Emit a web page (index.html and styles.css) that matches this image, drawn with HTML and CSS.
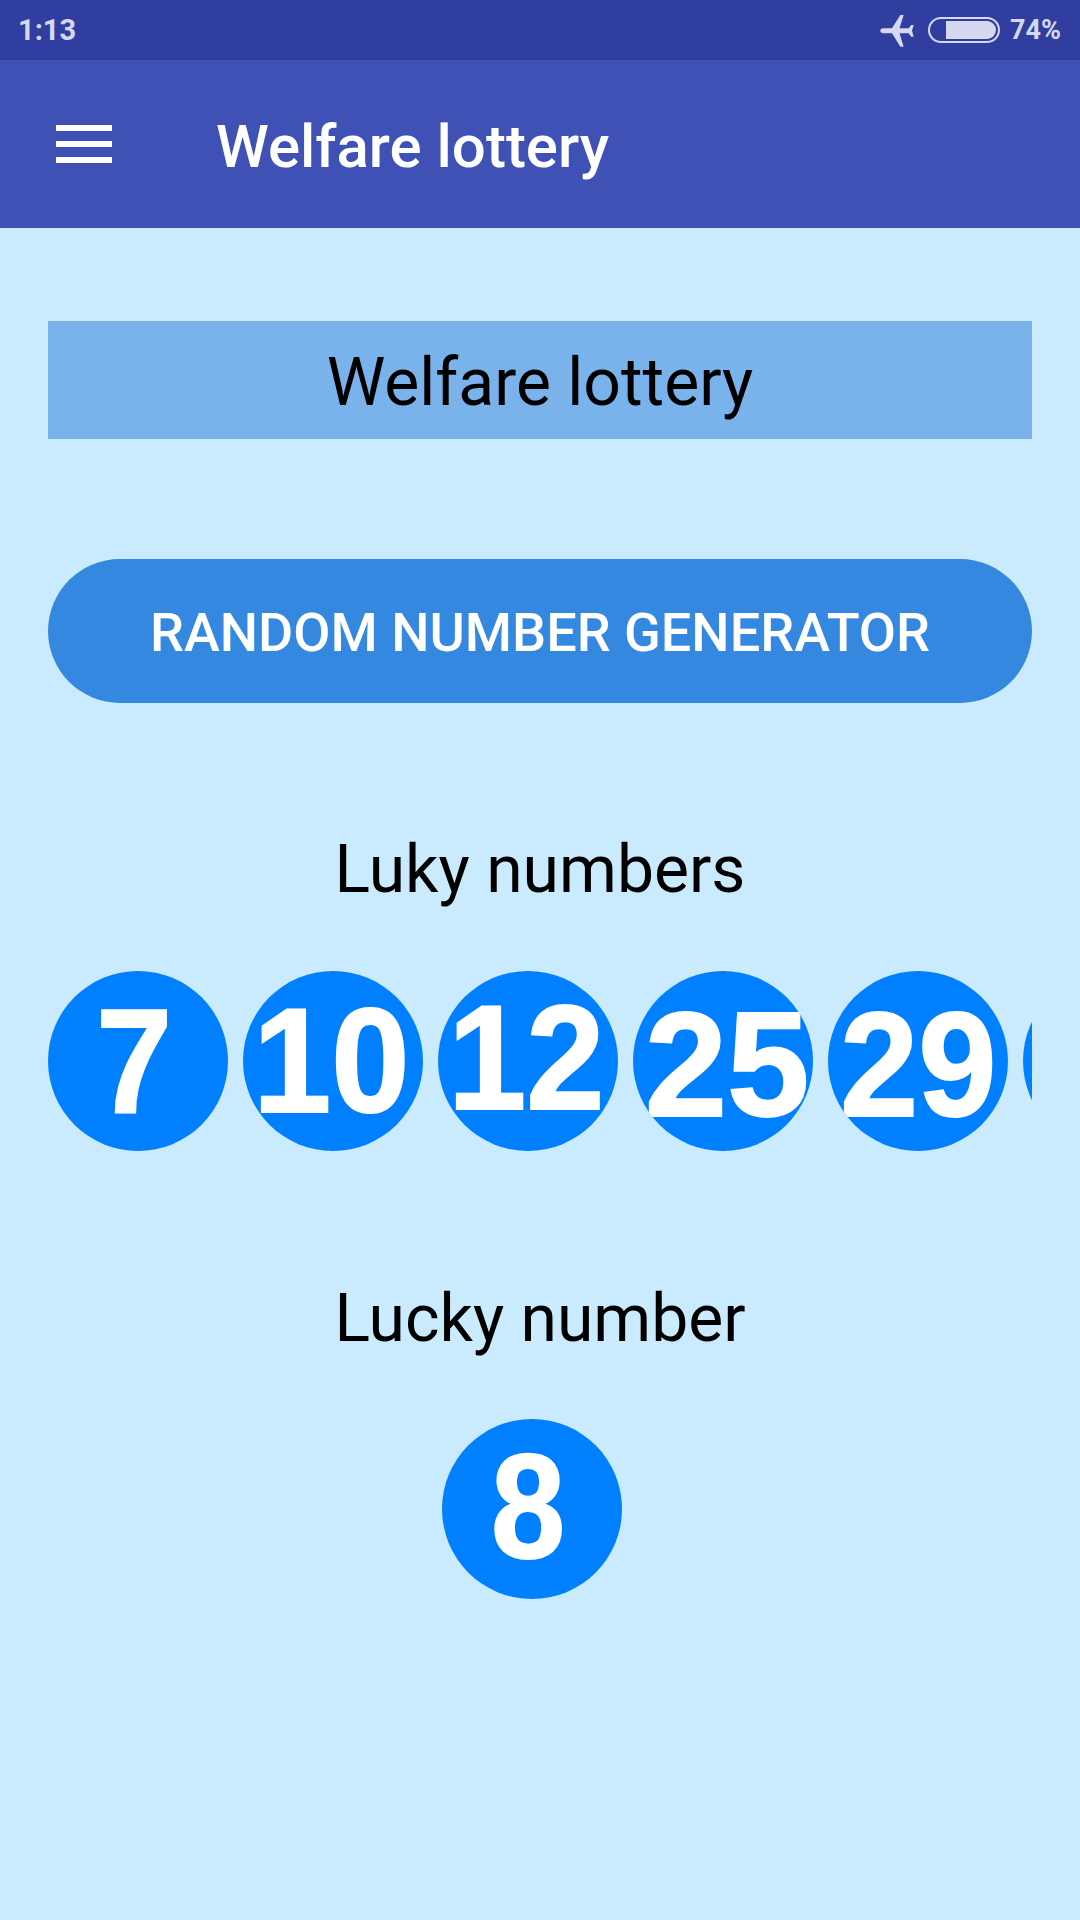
FILE: index.html
```html
<!DOCTYPE html>
<html lang="en">
  <head>
    <title>Welfare lottery</title>
    <link rel="stylesheet" href="styles.css">
  </head>
  <body>
    <!-- Status Bar -->
    <div class="status-bar">
      <span class="status-time">1:13</span>
      <div class="status-icons">
        <svg class="plane-icon" viewBox="0 0 24 24">
          <path transform="rotate(-90 12 12)" d="M21 16v-2l-8-5V3.5c0-.83-.67-1.5-1.5-1.5S10 2.67 10 3.5V9l-8 5v2l8-2.5V19l-2 1.5V22l3.5-1 3.5 1v-1.5L13 19v-5.5l8 2.5z"/>
        </svg>
        <div class="battery"><div class="battery-level"></div></div>
        <span class="status-percent">74%</span>
      </div>
    </div>

    <!-- App Bar -->
    <div class="app-bar">
      <div class="menu-icon">
        <span></span>
        <span></span>
        <span></span>
      </div>
      <div class="app-title">Welfare lottery</div>
    </div>

    <div class="content">
      <div class="lottery-name">Welfare lottery</div>
      <button class="generate-button">RANDOM NUMBER GENERATOR</button>

      <div class="section-title">Luky numbers</div>
      <div class="ball-row">
        <div class="ball"><span class="digits shift-7">7</span></div>
        <div class="ball"><span class="digits shift-10">10</span></div>
        <div class="ball"><span class="digits shift-12">12</span></div>
        <div class="ball"><span class="digits shift-25">25</span></div>
        <div class="ball"><span class="digits shift-29">29</span></div>
        <div class="ball"></div>
      </div>

      <div class="section-title lucky-title">Lucky number</div>
      <div class="lucky-ball">
        <div class="ball"><span class="digits shift-8">8</span></div>
      </div>
    </div>
  </body>
</html>
```

FILE: styles.css
```css
body {
  margin: 0;
  min-height: 1920px;
  font-family: Roboto, sans-serif;
  background: #c9ebfd;
}

/* Status Bar */
.status-bar {
  display: flex;
  align-items: center;
  justify-content: space-between;
  height: 60px;
  padding: 0 19px 0 18px;
  box-sizing: border-box;
  background: #303f9f;
  color: #d5d8f0;
  font-size: 29px;
  font-weight: 700;
}

.status-icons {
  display: flex;
  align-items: center;
}

.status-percent {
  font-size: 27px;
}

.plane-icon {
  width: 40px;
  height: 40px;
  fill: #d5d8f0;
  margin-right: 11px;
}

.battery {
  width: 72px;
  height: 26px;
  padding: 2px;
  box-sizing: border-box;
  border: 2px solid #d5d8f0;
  border-radius: 13px;
  display: flex;
  justify-content: flex-end;
  margin-right: 10px;
}

.battery-level {
  width: 50px;
  background: #d5d8f0;
  border-radius: 0 9px 9px 0;
}

/* App Bar */
.app-bar {
  display: flex;
  align-items: center;
  height: 168px;
  padding-left: 56px;
  background: #3f51b5;
}

.menu-icon {
  display: flex;
  flex-direction: column;
  gap: 10px;
  width: 56px;
  margin-right: 104px;
}

.menu-icon span {
  height: 6px;
  background: #ffffff;
}

.app-title {
  padding-top: 4px;
  color: #ffffff;
  font-size: 60px;
  font-weight: 500;
}

/* Content */
.content {
  padding: 93px 48px 0;
}

.lottery-name {
  height: 118px;
  line-height: 124px;
  text-align: center;
  background: #7ab3ec;
  color: #000000;
  font-size: 66px;
}

.generate-button {
  display: block;
  width: 100%;
  height: 144px;
  margin-top: 120px;
  padding-top: 3px;
  border: none;
  border-radius: 72px;
  background: #3488e0;
  color: #ffffff;
  font-family: Roboto, sans-serif;
  font-size: 54px;
  font-weight: 500;
}

.section-title {
  margin-top: 124px;
  height: 80px;
  line-height: 86px;
  text-align: center;
  color: #000000;
  font-size: 66px;
}

.lucky-title {
  margin-top: 128px;
  line-height: 80px;
}

/* Balls */
.ball-row {
  display: flex;
  gap: 15px;
  margin-top: 64px;
  overflow: hidden;
}

.ball {
  flex: none;
  width: 180px;
  height: 180px;
  border-radius: 50%;
  overflow: hidden;
  background: #0080ff;
  display: flex;
  align-items: center;
  justify-content: center;
}

.digits {
  flex: none;
  display: inline-block;
  color: #ffffff;
  font-family: "Liberation Sans", Arial, sans-serif;
  font-size: 148px;
  font-weight: 700;
  line-height: 180px;
  -webkit-text-stroke: 2px #ffffff;
  transform: scaleX(0.95);
}

.lucky-ball {
  display: flex;
  margin-top: 60px;
  padding-left: 394px;
}

/* each number sits a little differently in its ball */
.shift-7 { margin: 2px 8px 0 0; transform: scaleX(0.92); }
.shift-10 { margin: 0 4px 0 0; }
.shift-12 { margin: -6px 4px 0 0; }
.shift-25 { margin: 7px 0 0 8px; transform: none; }
.shift-29 { margin: 7px 0 0 0; }
.shift-8 { margin: -4px 8px 0 0; transform: scaleX(0.9); }
```
